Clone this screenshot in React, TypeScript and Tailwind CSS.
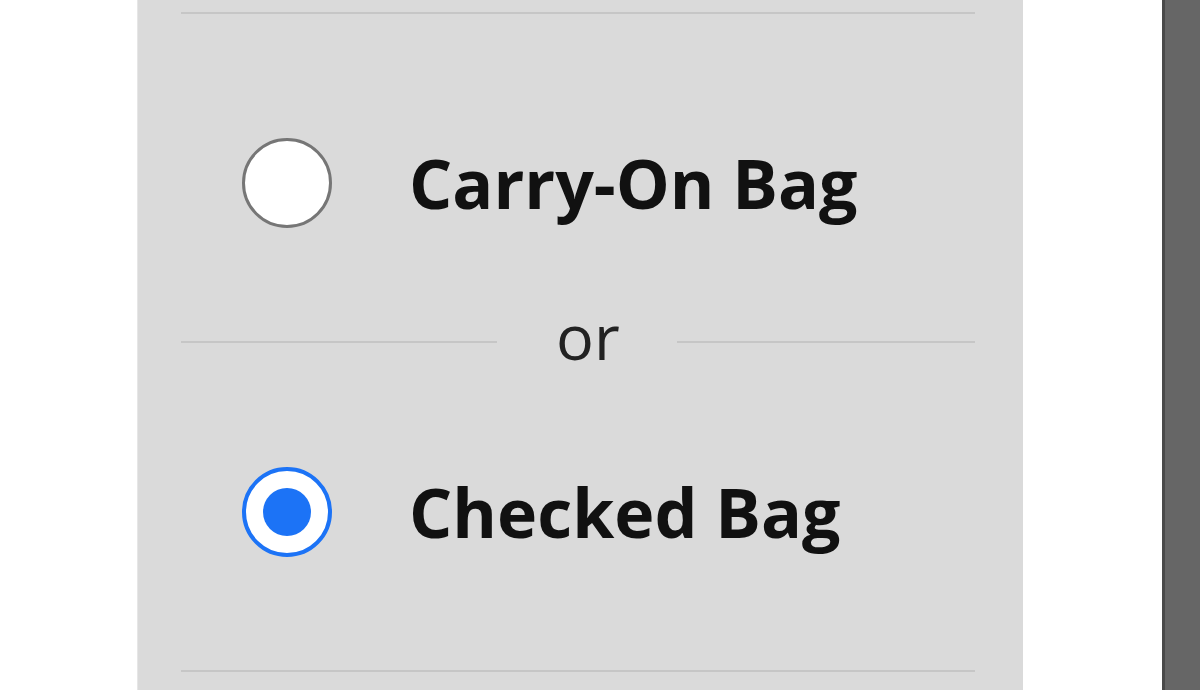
import React, { useState } from 'react';

const options = [
  { id: 'carry-on', label: 'Carry-On Bag' },
  { id: 'checked', label: 'Checked Bag' },
];

function Radio({ checked }: { checked: boolean }) {
  if (checked) {
    return (
      <span className="flex h-[90px] w-[90px] shrink-0 items-center justify-center rounded-full border-[4px] border-[#1c73f6] bg-white">
        <span className="h-[48px] w-[48px] rounded-full bg-[#1c73f6]" />
      </span>
    );
  }
  return <span className="h-[90px] w-[90px] shrink-0 rounded-full border-[3px] border-[#767676] bg-white" />;
}

export default function App() {
  const [bag, setBag] = useState('checked');

  return (
    <div className="flex h-[690px] w-[1200px] overflow-hidden bg-white" style={{ fontFamily: '"Open Sans", sans-serif' }}>
      <div className="w-[137px] shrink-0 bg-white" />
      <div className="w-[886px] shrink-0 border-l border-[#e6e6e6] bg-[#dadada] pl-[43px] pr-[48px]">
        <div className="mt-[12px] h-[2px] bg-[#c6c6c6]" />

        <label className="flex h-[327px] cursor-pointer items-start pl-[61px] pt-[124px]" onClick={() => setBag('carry-on')}>
          <Radio checked={bag === 'carry-on'} />
          <span className="ml-[77px] text-[68px] font-bold leading-[90px] text-[#111]">{options[0].label}</span>
        </label>

        <div className="flex h-[2px] items-center">
          <div className="h-[2px] w-[316px] bg-[#c6c6c6]" />
          <span className="pl-[59px] pr-[57px] text-[63px] leading-[40px] text-[#222] -mt-[12px]">or</span>
          <div className="h-[2px] flex-1 bg-[#c6c6c6]" />
        </div>

        <label className="flex h-[327px] cursor-pointer items-start pl-[61px] pt-[124px]" onClick={() => setBag('checked')}>
          <Radio checked={bag === 'checked'} />
          <span className="ml-[77px] text-[68px] font-bold leading-[90px] text-[#111]">{options[1].label}</span>
        </label>

        <div className="h-[2px] bg-[#c6c6c6]" />
      </div>
      <div className="flex-1 bg-white" />
      <div className="w-[3px] shrink-0 bg-[#4a4a4a]" />
      <div className="w-[35px] shrink-0 bg-[#666666]" />
    </div>
  );
}
